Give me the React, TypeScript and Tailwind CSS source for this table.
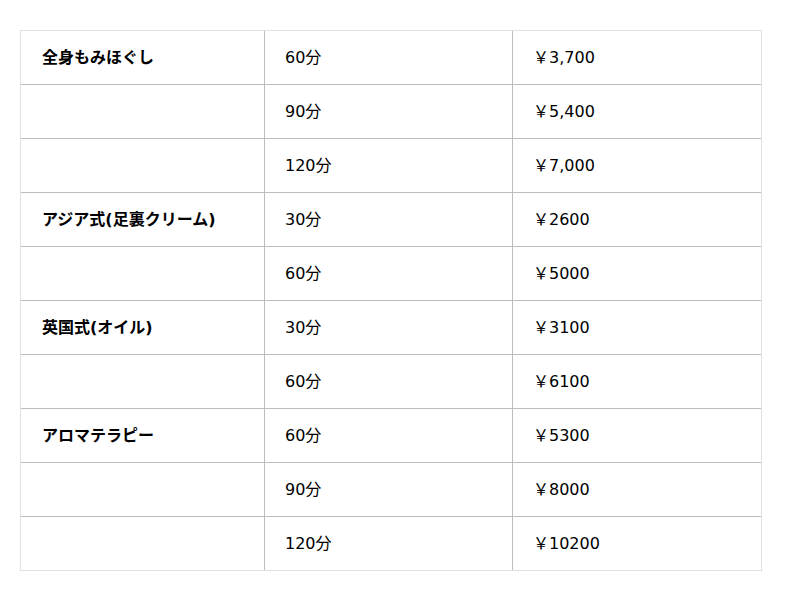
import React from 'react';

const rows = [
  { name: '全身もみほぐし', time: '60分', price: '￥3,700' },
  { name: '', time: '90分', price: '￥5,400' },
  { name: '', time: '120分', price: '￥7,000' },
  { name: 'アジア式(足裏クリーム)', time: '30分', price: '￥2600' },
  { name: '', time: '60分', price: '￥5000' },
  { name: '英国式(オイル)', time: '30分', price: '￥3100' },
  { name: '', time: '60分', price: '￥6100' },
  { name: 'アロマテラピー', time: '60分', price: '￥5300' },
  { name: '', time: '90分', price: '￥8000' },
  { name: '', time: '120分', price: '￥10200' },
];

export default function App() {
  return (
    <div className="min-h-screen bg-white pt-[30px] pl-[20px] text-[16px] text-black font-['DejaVu_Sans','Noto_Sans_CJK_JP',sans-serif]">
      <table className="border-separate border-spacing-0 border border-[#e0e0e0] w-[742px] table-fixed">
        <colgroup>
          <col className="w-[244px]" />
          <col className="w-[248px]" />
          <col />
        </colgroup>
        <tbody>
          {rows.map((r, i) => {
            const last = i === rows.length - 1;
            return (
              <tr key={i} className={last ? 'h-[53px]' : 'h-[54px]'}>
                <td className={`pl-[21px] align-middle font-bold border-r border-[#bdbdbd] ${last ? '' : 'border-b'}`}>
                  {r.name}
                </td>
                <td className={`pl-[20px] align-middle border-r border-[#bdbdbd] ${last ? '' : 'border-b'}`}>
                  {r.time}
                </td>
                <td className={`pl-[20px] align-middle border-[#bdbdbd] ${last ? '' : 'border-b'}`}>
                  {r.price}
                </td>
              </tr>
            );
          })}
        </tbody>
      </table>
    </div>
  );
}
